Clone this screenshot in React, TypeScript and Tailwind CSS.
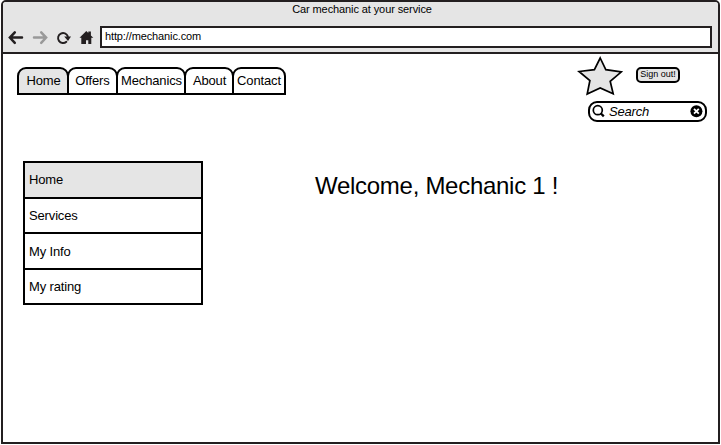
const tabs = [
  { label: 'Home', box: 'w-[52px] bg-[#e5e5e5] pl-px' },
  { label: 'Offers', box: 'w-[51px] -ml-[2px] bg-white' },
  { label: 'Mechanics', box: 'w-[70px] -ml-[2px] bg-white pl-px' },
  { label: 'About', box: 'w-[50px] -ml-[2px] bg-white pl-px' },
  { label: 'Contact', box: 'w-[54px] -ml-[2px] bg-white' },
];

const menu = [
  { label: 'Home', box: 'h-9 bg-[#e5e5e5]' },
  { label: 'Services', box: 'h-[35px] bg-white' },
  { label: 'My Info', box: 'h-9 bg-white pt-[2px]' },
  { label: 'My rating', box: 'h-[35px] bg-white' },
];

function NavIcons() {
  return (
    <svg width="97" height="24" viewBox="3 25 97 24" fill="none" strokeLinecap="round" className="shrink-0">
      <path d="M14.8 31.4 9.9 36.6l4.9 5.2M10.2 36.6H22" stroke="#231f20" strokeWidth="2.5" />
      <path d="M41.2 31.4l4.9 5.2-4.9 5.2M45.8 36.6H34" stroke="#999" strokeWidth="2.5" />
      <path d="M66.4 40.8A5 5 0 1 1 67.8 35.4" stroke="#231f20" strokeWidth="1.9" />
      <path d="M64.2 35.6h6.8l-3 4.4z" fill="#231f20" />
      <path d="M79.5 36.8 86.3 30l2 1.9v-1.3h2.6v3.9l2.4 2.3h-2V43h-3v-3.7H86V43h-4.7v-6.2z" fill="#231f20" />
    </svg>
  );
}

function Star() {
  return (
    <svg width="46" height="42" viewBox="577 55 46 42" className="shrink-0">
      <path d="M600.2 58 605.8 69.6 621.4 71.8 610.2 81.3 613.2 93.8 600.2 88 587.2 94 589.9 80.5 579 71.5 594.4 69.6z" fill="#e5e5e5" stroke="#000" strokeWidth="1.7" />
    </svg>
  );
}

export default function App() {
  return (
    <div className="h-[445px] w-[721px] overflow-hidden bg-white pl-px font-['Liberation_Sans',Arial,sans-serif] text-black">
      <div className="flex h-[444px] w-[719px] flex-col rounded-t-[5px] border-2 border-[#231f20] bg-white">
        <header className="h-[52px] shrink-0 rounded-t-[3px] border-b-2 border-[#231f20] bg-[#e5e5e5]">
          <div className="h-6 pl-[3px] pt-px text-center text-[11px] leading-[13px] tracking-[-0.1px]">Car mechanic at your service</div>
          <div className="flex">
            <NavIcons />
            <div className="h-[22px] w-[612px] border-2 border-[#231f20] bg-white pl-[3px] text-[11px] leading-[17px] tracking-[-0.12px]">http://mechanic.com</div>
          </div>
        </header>

        <div className="flex h-[108px] shrink-0 justify-between pl-[14px]">
          <nav className="flex pt-[13px]">
            {tabs.map((t) => (
              <div key={t.label} className={`flex h-7 justify-center whitespace-nowrap rounded-t-[9px] border-2 border-black text-[13px] leading-[24px] tracking-[-0.15px] ${t.box}`}>
                {t.label}
              </div>
            ))}
          </nav>
          <div className="w-[141px] pt-px">
            <div className="flex">
              <Star />
              <div className="ml-[13px] mt-[12px] h-4 w-[44px] whitespace-nowrap rounded-[5px] border-2 border-black bg-[#e5e5e5] text-center text-[9px] leading-[10px]">Sign out!</div>
            </div>
            <div className="ml-[11px] mt-[4px] flex h-[21px] w-[119px] items-center rounded-[9px] border-2 border-black bg-white">
              <svg width="19" height="17" viewBox="590 103 19 17" fill="none" stroke="#000">
                <circle cx="597.8" cy="110.2" r="4.5" strokeWidth="1.7" />
                <path d="M600.7 113.3 603.8 116.4" strokeWidth="2.3" />
              </svg>
              <span className="flex-1 text-[13px] italic leading-[17px] tracking-[-0.2px]">Search</span>
              <svg width="18" height="17" viewBox="687 103 18 17" fill="none">
                <circle cx="696.4" cy="111.2" r="6" fill="#000" />
                <path d="M694 108.8l4.8 4.8M698.8 108.8l-4.8 4.8" stroke="#fff" strokeWidth="1.8" />
              </svg>
            </div>
          </div>
        </div>

        <main className="flex pl-5">
          <ul className="-mt-px w-[180px] shrink-0 border-2 border-b-0 border-black text-[13px] tracking-[-0.15px]">
            {menu.map((m) => (
              <li key={m.label} className={`flex items-center border-b-2 border-black pl-1 ${m.box}`}>{m.label}</li>
            ))}
          </ul>
          <h1 className="ml-[112px] mt-[10px] whitespace-nowrap text-[24px] leading-[28px] tracking-[-0.28px]">Welcome, Mechanic 1 !</h1>
        </main>
      </div>
    </div>
  );
}
